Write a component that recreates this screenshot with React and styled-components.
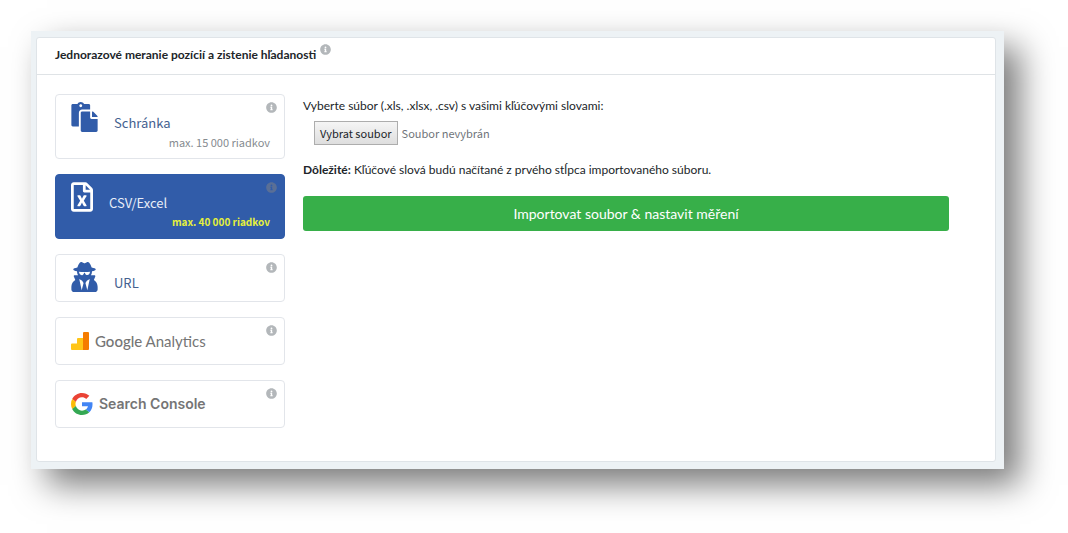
import React, { useId, useRef, useState } from "react";
import styled, { createGlobalStyle } from "styled-components";
import {
  FaInfoCircle,
  FaPaste,
  FaRegFileExcel,
  FaUserSecret,
} from "react-icons/fa";

const GlobalStyle = createGlobalStyle`
  *,
  *::before,
  *::after {
    box-sizing: border-box;
  }

  body {
    margin: 0;
    background: #fff;
    color: #212529;
    font-family: Lato, "Open Sans", sans-serif;
    font-size: 12px;
    line-height: 18px;
  }

  button {
    font-family: inherit;
  }
`;

const Page = styled.main`
  margin: 31px 64px 64px 31px;
  padding: 6px 8px 7px 5px;
  background: #edf2f5;
  box-shadow: 16px 16px 32px rgba(0, 0, 0, 0.52);
`;

const Panel = styled.section`
  border: 1px solid #dfe4e8;
  border-radius: 3px;
  background: #fff;
`;

const PanelHeader = styled.header`
  display: flex;
  align-items: flex-start;
  gap: 4px;
  padding: 6px 18px 10px;
  border-bottom: 1px solid #dfe3e6;
`;

const Title = styled.h1`
  margin: 0;
  padding-top: 2px;
  font-size: 12px;
  font-weight: 700;
  line-height: 18px;
`;

const PanelBody = styled.div`
  display: grid;
  grid-template-columns: 230px minmax(0, 1fr);
  gap: 18px;
  padding: 19px 46px 33px 18px;
`;

const SourceList = styled.nav`
  display: flex;
  flex-direction: column;
  gap: 15px;
  font-family: "Noto Sans CJK JP", "Noto Sans", sans-serif;
`;

const InfoIcon = styled(FaInfoCircle)`
  flex: none;
  width: 11px;
  height: 11px;
  color: ${({ $dim }) => ($dim ? "#5a6f96" : "#b3b7ba")};
`;

const SourceButton = styled.button`
  display: flex;
  flex-direction: column;
  width: 100%;
  min-height: 48px;
  padding: 7px 7px 7px 15px;
  border: 1px solid ${({ $active }) => ($active ? "#2f5ba8" : "#e2e5ea")};
  border-radius: 4px;
  background: ${({ $active }) => ($active ? "#315ca9" : "#fff")};
  color: ${({ $active }) => ($active ? "#fff" : "#315ca9")};
  text-align: left;
  cursor: pointer;
`;

const SourceRow = styled.span`
  display: flex;
  align-items: flex-start;
  width: 100%;

  ${InfoIcon} {
    margin-left: auto;
  }
`;

const SourceIcon = styled.span`
  display: flex;
  margin-right: 16px;

  svg {
    width: ${({ $width }) => $width}px;
    height: 30px;
  }
`;

const SourceName = styled.span`
  padding-top: 11px;
  color: ${({ $active }) => ($active ? "#e8eef8" : "#44618f")};
  font-size: 13px;
  line-height: 20px;
`;

const SourceLimit = styled.span`
  align-self: flex-end;
  padding-right: 7px;
  color: ${({ $active }) => ($active ? "#e6f03c" : "#868b90")};
  font-size: ${({ $active }) => ($active ? 10 : 11)}px;
  font-weight: ${({ $active }) => ($active ? 700 : 400)};
  line-height: 18px;
`;

const Brand = styled.span`
  display: flex;
  align-items: center;
  gap: 6px;
  padding-top: 5px;
  color: #757575;
  font-family: Lato, sans-serif;
  font-size: 15px;
  line-height: 22px;

  b {
    font-weight: 500;
  }
`;

const ConsoleBrand = styled(Brand)`
  font-family: Inter, "Liberation Sans", sans-serif;
  font-size: 14px;
  font-weight: 600;
`;

const ImportForm = styled.form`
  padding-top: 3px;
`;

const FieldLabel = styled.label`
  display: block;
`;

const FileRow = styled.div`
  display: flex;
  align-items: center;
  gap: 4px;
  margin: 6px 0 16px;
  padding-left: 11px;
  color: #6f7479;
  font-family: "Noto Sans CJK JP", "Noto Sans", sans-serif;
  font-size: 11px;
`;

const FileButton = styled.button`
  height: 24px;
  padding: 0 5px;
  border: 1px solid #adadad;
  background: linear-gradient(#f5f5f5, #dedede);
  color: #212529;
  font-size: 11px;
  line-height: 20px;
`;

const FileInput = styled.input`
  display: none;
`;

const Note = styled.p`
  margin: 0 0 17px;
`;

const SubmitButton = styled.button`
  display: block;
  width: 100%;
  padding: 8px 12px 7px;
  border: 0;
  border-radius: 3px;
  background: #37af49;
  color: #fff;
  font-size: 14px;
  line-height: 20px;
  cursor: pointer;
`;

const AnalyticsLogo = () => (
  <svg width="18" height="18" viewBox="0 0 18 18" aria-hidden="true">
    <path
      d="M12 0v18H1a1 1 0 0 1-1-1v-4.400a1 1 0 0 1 1-1h5V7a1 1 0 0 1 1-1h5z"
      fill="#ffc517"
    />
    <path d="M12 1a1 1 0 0 1 1-1h4a1 1 0 0 1 1 1v16a1 1 0 0 1-1 1h-5z" fill="#f57c00" />
  </svg>
);

const GoogleLogo = () => (
  <svg width="22" height="22" viewBox="0 0 48 48" aria-hidden="true">
    <path
      fill="#ea4335"
      d="M24 9.500c3.540 0 6.710 1.220 9.210 3.600l6.850-6.850C35.900 2.380 30.470 0 24 0 14.620 0 6.510 5.380 2.560 13.220l7.980 6.190C12.430 13.720 17.740 9.500 24 9.500z"
    />
    <path
      fill="#4285f4"
      d="M46.980 24.550c0-1.570-.15-3.090-.38-4.550H24v9.020h12.940c-.58 2.960-2.260 5.480-4.780 7.180l7.730 6c4.510-4.180 7.090-10.360 7.090-17.650z"
    />
    <path
      fill="#fbbc05"
      d="M10.530 28.590c-.48-1.450-.76-2.990-.76-4.590s.27-3.140.76-4.590l-7.980-6.190C.92 16.460 0 20.120 0 24c0 3.880.92 7.540 2.560 10.780l7.970-6.190z"
    />
    <path
      fill="#34a853"
      d="M24 48c6.480 0 11.930-2.130 15.890-5.810l-7.730-6c-2.150 1.450-4.920 2.300-8.160 2.300-6.260 0-11.570-4.220-13.470-9.910l-7.980 6.190C6.510 42.620 14.620 48 24 48z"
    />
  </svg>
);

const sources = [
  {
    id: "clipboard",
    name: "Schránka",
    icon: <FaPaste />,
    iconWidth: 27,
    limit: "max. 15 000 riadkov",
  },
  {
    id: "csv",
    name: "CSV/Excel",
    icon: <FaRegFileExcel />,
    iconWidth: 22,
    limit: "max. 40 000 riadkov",
  },
  { id: "url", name: "URL", icon: <FaUserSecret />, iconWidth: 27 },
  {
    id: "analytics",
    brand: (
      <Brand>
        <AnalyticsLogo />
        <span>
          <b>Google</b> Analytics
        </span>
      </Brand>
    ),
  },
  {
    id: "console",
    brand: (
      <ConsoleBrand>
        <GoogleLogo />
        Search Console
      </ConsoleBrand>
    ),
  },
];

const Source = ({ source, active, onSelect }) => (
  <SourceButton
    type="button"
    $active={active}
    aria-pressed={active}
    onClick={() => onSelect(source.id)}
  >
    <SourceRow>
      {source.brand || (
        <>
          <SourceIcon $width={source.iconWidth}>{source.icon}</SourceIcon>
          <SourceName $active={active}>{source.name}</SourceName>
        </>
      )}
      <InfoIcon $dim={active} />
    </SourceRow>
    {source.limit && <SourceLimit $active={active}>{source.limit}</SourceLimit>}
  </SourceButton>
);

const App = () => {
  const [selected, setSelected] = useState("csv");
  const [fileName, setFileName] = useState("");
  const fileRef = useRef(null);
  const fileId = useId();

  const handleFile = (e) => {
    const file = e.target.files[0];
    setFileName(file ? file.name : "");
  };

  return (
    <>
      <GlobalStyle />
      <Page>
        <Panel>
          <PanelHeader>
            <Title>Jednorazové meranie pozícií a zistenie hľadanosti</Title>
            <InfoIcon />
          </PanelHeader>
          <PanelBody>
            <SourceList>
              {sources.map((source) => (
                <Source
                  key={source.id}
                  source={source}
                  active={selected === source.id}
                  onSelect={setSelected}
                />
              ))}
            </SourceList>
            <ImportForm onSubmit={(e) => e.preventDefault()}>
              <FieldLabel htmlFor={fileId}>
                Vyberte súbor (.xls, .xlsx, .csv) s vašimi kľúčovými slovami:
              </FieldLabel>
              <FileRow>
                <FileButton
                  type="button"
                  onClick={() => fileRef.current.click()}
                >
                  Vybrat soubor
                </FileButton>
                <span>{fileName || "Soubor nevybrán"}</span>
                <FileInput
                  id={fileId}
                  ref={fileRef}
                  type="file"
                  accept=".xls,.xlsx,.csv"
                  onChange={handleFile}
                />
              </FileRow>
              <Note>
                <strong>Dôležité:</strong> Kľúčové slová budú načítané z prvého
                stĺpca importovaného súboru.
              </Note>
              <SubmitButton type="submit">
                Importovat soubor &amp; nastavit měření
              </SubmitButton>
            </ImportForm>
          </PanelBody>
        </Panel>
      </Page>
    </>
  );
};

export default App;
